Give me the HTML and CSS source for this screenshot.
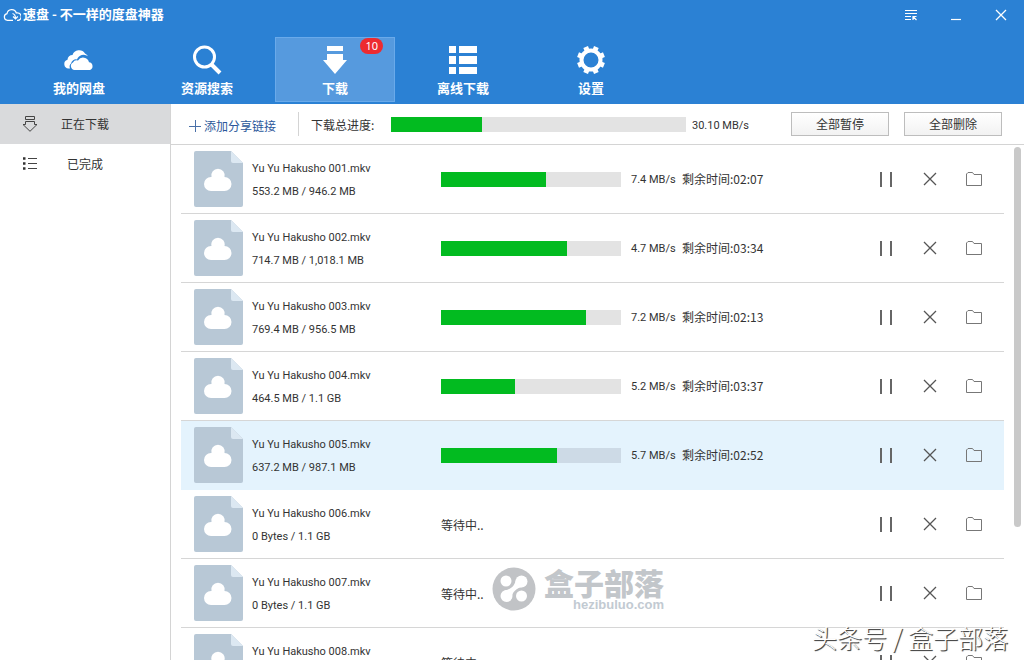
FILE: index.html
```html
<!DOCTYPE html>
<html lang="zh-CN">
<head>
<meta charset="utf-8">
<title>速盘 - 不一样的度盘神器</title>
<link rel="stylesheet" href="styles.css">
</head>
<body>
<svg class="defs" aria-hidden="true">
  <symbol id="i-file" viewBox="0 0 49 56">
    <path d="M2 0H37L49 12V54a2 2 0 0 1-2 2H2a2 2 0 0 1-2-2V2a2 2 0 0 1 2-2z" fill="#b8c8d6"/>
    <path d="M37 0L49 12H39a2 2 0 0 1-2-2z" fill="#dce8f2"/>
    <path d="M17 40a7 7 0 0 1 0-14h.500a6.700 6.700 0 1 1 13 0H30.500a7 7 0 0 1 0 14z" fill="#fff"/>
  </symbol>
  <symbol id="i-pause" viewBox="0 0 16 16"><path d="M3 1V16M13 1V16" stroke="#666" stroke-width="2"/></symbol>
  <symbol id="i-close" viewBox="0 0 16 16"><path d="M2 2L14 14M14 2L2 14" stroke="#555" stroke-width="1.300"/></symbol>
  <symbol id="i-folder" viewBox="0 0 18 16"><path d="M1.500 14.500V3L3 1.500H7.500L9 3.500H16.500V14.500z" fill="none" stroke="#777"/></symbol>
</svg>
<div class="app">
  <header class="header">
    <div class="titlebar">
      <svg class="logo" viewBox="0 0 18 14"><path d="M10 12.400H4.500A3.400 3.400 0 0 1 4 5.700 4.800 4.800 0 0 1 13.300 5a3.800 3.800 0 0 1 2 7.400H14M9.500 5.500c2 .500 3 2 3 5M10 8.500l2.500 2.500L14.800 8.500" fill="none" stroke="#fff" stroke-width="1.200"/></svg>
      <h1 class="title">速盘 - 不一样的度盘神器</h1>
      <div class="window-buttons">
        <button class="win" aria-label="菜单"><svg viewBox="0 0 14 14"><path d="M1 2.500H13M1 5.500H13M1 8.500H7M1 11.500H7M9 12V8.500H12.500M9 8.500L12.500 12" fill="none" stroke="#fff" stroke-width="1.200"/></svg></button>
        <button class="win" aria-label="最小化"><svg viewBox="0 0 14 14"><path d="M2 11.500H12" stroke="#fff" stroke-width="1.200"/></svg></button>
        <button class="win" aria-label="关闭"><svg viewBox="0 0 14 14"><path d="M2 2L12 12M12 2L2 12" stroke="#fff" stroke-width="1.300"/></svg></button>
      </div>
    </div>
    <nav class="tabs">
      <button class="tab"><svg viewBox="0 0 32 32"><path d="M7 24.500H5.500a4.500 4.500 0 0 1-1-8.800A5 5 0 0 1 9.500 11a7 7 0 0 1 12.500-1.500 6 6 0 0 1 3 2.800A7 7 0 0 0 14 15.500a5 5 0 0 0-6 4 4.500 4.500 0 0 0-1 5z" fill="#fff"/><path d="M11.500 26a4 4 0 0 1-1.500-7.500 4 4 0 0 1 5-2 6 6 0 0 1 11 1.800A4 4 0 0 1 27 26z" fill="#fff"/></svg>我的网盘</button>
      <button class="tab"><svg viewBox="0 0 32 32"><circle cx="13.500" cy="13" r="10" fill="none" stroke="#fff" stroke-width="3"/><path d="M20.500 20.500L29 29" stroke="#fff" stroke-width="4"/></svg>资源搜索</button>
      <button class="tab tab-active"><svg viewBox="0 0 32 32"><path d="M8 2H24V7H8zM8 10H24V16H28L16 30 4 16H8z" fill="#fff"/></svg>下载<span class="badge">10</span></button>
      <button class="tab"><svg viewBox="0 0 32 32"><path d="M2 2h7v7H2zM12 2h18v7H12zM2 12h7v8H2zM12 12h18v8H12zM2 23h7v7H2zM12 23h18v7H12z" fill="#fff"/></svg>离线下载</button>
      <button class="tab"><svg viewBox="0 0 32 32"><g fill="#fff"><path id="tooth" d="M13.500 2h5v6h-5z" transform="rotate(22.500 16 16)"/><use href="#tooth" transform="rotate(45 16 16)"/><use href="#tooth" transform="rotate(90 16 16)"/><use href="#tooth" transform="rotate(135 16 16)"/><use href="#tooth" transform="rotate(180 16 16)"/><use href="#tooth" transform="rotate(225 16 16)"/><use href="#tooth" transform="rotate(270 16 16)"/><use href="#tooth" transform="rotate(315 16 16)"/></g><circle cx="16" cy="16" r="9.500" fill="none" stroke="#fff" stroke-width="4"/></svg>设置</button>
    </nav>
  </header>
  <div class="body">
    <aside class="sidebar">
      <button class="side side-active"><svg viewBox="0 0 16 16"><path d="M3.500 .500H12.500V3.500H3.500zM3.500 5.500H12.500V8.500H15L8 15.300 1 8.500H3.500z" fill="none" stroke="#444"/></svg><span>正在下载</span></button>
      <button class="side"><svg viewBox="0 0 16 16"><path d="M1 2.500H3.500M1 7.500H3.500M1 12.500H3.500" stroke="#333" stroke-width="2.500"/><path d="M6 2.500H15M6 7.500H15M6 12.500H15" stroke="#444"/></svg><span>已完成</span></button>
    </aside>
    <main class="main">
      <div class="toolbar">
        <a class="add" href="#"><svg viewBox="0 0 12 12"><path d="M6.500 0V12M0 6.500H12" stroke="#4a70a8"/></svg>添加分享链接</a>
        <span class="label" id="total">下载总进度:</span>
        <div class="bar bar-total" role="progressbar" aria-labelledby="total"><div class="fill" style="width:31%"></div></div>
        <span class="total-speed">30.10 MB/s</span>
        <div class="bulk"><button class="btn">全部暂停</button><button class="btn">全部删除</button></div>
      </div>
      <div class="scroller">
        <ul class="list">
          <li class="row"><svg class="file"><use href="#i-file"/></svg><div class="info"><span>Yu Yu Hakusho 001.mkv</span><span>553.2 MB / 946.2 MB</span></div><div class="bar" role="progressbar" aria-label="001"><div class="fill" style="width:58.400%"></div></div><div class="state"><span class="speed">7.4 MB/s</span><span class="left">剩余时间:02:07</span></div><div class="actions"><button aria-label="暂停"><svg><use href="#i-pause"/></svg></button><button aria-label="删除"><svg><use href="#i-close"/></svg></button><button aria-label="打开文件夹"><svg class="folder"><use href="#i-folder"/></svg></button></div></li>
          <li class="row"><svg class="file"><use href="#i-file"/></svg><div class="info"><span>Yu Yu Hakusho 002.mkv</span><span>714.7 MB / 1,018.1 MB</span></div><div class="bar" role="progressbar" aria-label="002"><div class="fill" style="width:70.200%"></div></div><div class="state"><span class="speed">4.7 MB/s</span><span class="left">剩余时间:03:34</span></div><div class="actions"><button aria-label="暂停"><svg><use href="#i-pause"/></svg></button><button aria-label="删除"><svg><use href="#i-close"/></svg></button><button aria-label="打开文件夹"><svg class="folder"><use href="#i-folder"/></svg></button></div></li>
          <li class="row"><svg class="file"><use href="#i-file"/></svg><div class="info"><span>Yu Yu Hakusho 003.mkv</span><span>769.4 MB / 956.5 MB</span></div><div class="bar" role="progressbar" aria-label="003"><div class="fill" style="width:80.500%"></div></div><div class="state"><span class="speed">7.2 MB/s</span><span class="left">剩余时间:02:13</span></div><div class="actions"><button aria-label="暂停"><svg><use href="#i-pause"/></svg></button><button aria-label="删除"><svg><use href="#i-close"/></svg></button><button aria-label="打开文件夹"><svg class="folder"><use href="#i-folder"/></svg></button></div></li>
          <li class="row"><svg class="file"><use href="#i-file"/></svg><div class="info"><span>Yu Yu Hakusho 004.mkv</span><span>464.5 MB / 1.1 GB</span></div><div class="bar" role="progressbar" aria-label="004"><div class="fill" style="width:41.200%"></div></div><div class="state"><span class="speed">5.2 MB/s</span><span class="left">剩余时间:03:37</span></div><div class="actions"><button aria-label="暂停"><svg><use href="#i-pause"/></svg></button><button aria-label="删除"><svg><use href="#i-close"/></svg></button><button aria-label="打开文件夹"><svg class="folder"><use href="#i-folder"/></svg></button></div></li>
          <li class="row row-active"><svg class="file"><use href="#i-file"/></svg><div class="info"><span>Yu Yu Hakusho 005.mkv</span><span>637.2 MB / 987.1 MB</span></div><div class="bar" role="progressbar" aria-label="005"><div class="fill" style="width:64.500%"></div></div><div class="state"><span class="speed">5.7 MB/s</span><span class="left">剩余时间:02:52</span></div><div class="actions"><button aria-label="暂停"><svg><use href="#i-pause"/></svg></button><button aria-label="删除"><svg><use href="#i-close"/></svg></button><button aria-label="打开文件夹"><svg class="folder"><use href="#i-folder"/></svg></button></div></li>
          <li class="row"><svg class="file"><use href="#i-file"/></svg><div class="info"><span>Yu Yu Hakusho 006.mkv</span><span>0 Bytes / 1.1 GB</span></div><div class="waiting">等待中..</div><div class="actions"><button aria-label="暂停"><svg><use href="#i-pause"/></svg></button><button aria-label="删除"><svg><use href="#i-close"/></svg></button><button aria-label="打开文件夹"><svg class="folder"><use href="#i-folder"/></svg></button></div></li>
          <li class="row"><svg class="file"><use href="#i-file"/></svg><div class="info"><span>Yu Yu Hakusho 007.mkv</span><span>0 Bytes / 1.1 GB</span></div><div class="waiting">等待中..</div><div class="actions"><button aria-label="暂停"><svg><use href="#i-pause"/></svg></button><button aria-label="删除"><svg><use href="#i-close"/></svg></button><button aria-label="打开文件夹"><svg class="folder"><use href="#i-folder"/></svg></button></div></li>
          <li class="row"><svg class="file"><use href="#i-file"/></svg><div class="info"><span>Yu Yu Hakusho 008.mkv</span></div><div class="waiting">等待中..</div><div class="actions"><button aria-label="暂停"><svg><use href="#i-pause"/></svg></button><button aria-label="删除"><svg><use href="#i-close"/></svg></button><button aria-label="打开文件夹"><svg class="folder"><use href="#i-folder"/></svg></button></div></li>
        </ul>
        <div class="track"><div class="thumb"></div></div>
      </div>
    </main>
  </div>
  <div class="brand">
    <svg viewBox="0 0 44 44"><circle cx="22" cy="22" r="21.500" fill="#c1c3c6"/><g fill="#fff"><circle cx="14" cy="14" r="5.500"/><circle cx="29.500" cy="29" r="5.500"/><circle cx="29.500" cy="14.500" r="6"/><circle cx="14.500" cy="29" r="6"/><path d="M24 12C23 18 20 22 12.500 23.500L19.500 32C20 25 24 21 32 19.500z"/></g></svg>
    <div class="brand-text"><span class="brand-name">盒子部落</span><span class="brand-url">hezibuluo.com</span></div>
  </div>
  <div class="credit">头条号 / 盒子部落</div>
</div>
</body>
</html>
```
FILE: styles.css
```css
* { box-sizing: border-box; }
body {
  margin: 0;
  font: 12px/16px "Noto Sans CJK SC", "Noto Sans", sans-serif;
  color: #333;
  background: #fff;
}
button {
  border: 0;
  padding: 0;
  background: none;
  font: inherit;
  color: inherit;
}
.defs { display: none; }
.app {
  position: relative;
  height: 100vh;
  display: flex;
  flex-direction: column;
  overflow: hidden;
}
.header {
  background: #2b81d4;
  color: #fff;
  padding-bottom: 2px;
}
.titlebar {
  display: flex;
  align-items: center;
  height: 30px;
  margin-bottom: 7px;
  padding: 0 16px 0 3px;
}
.logo { width: 18px; height: 14px; }
.title { margin: 0 0 0 2px; padding-bottom: 2px; font-size: 13px; line-height: 16px; font-weight: 700; }
.window-buttons { display: flex; gap: 31px; margin-left: auto; }
.win { width: 14px; height: 14px; }
.win svg { display: block; width: 14px; height: 14px; }
.tabs { display: flex; gap: 8px; padding-left: 19px; }
.tab {
  position: relative;
  display: flex;
  flex-direction: column;
  align-items: center;
  gap: 4px;
  width: 120px;
  height: 65px;
  padding-top: 6px;
  border: 1px solid transparent;
  font-size: 13px;
  font-weight: 700;
}
.tab svg { width: 32px; height: 32px; }
.tab-active { background: #569ade; border-color: #6aaaea; }
.badge {
  position: absolute;
  top: 0;
  right: 11px;
  padding: 0 5px;
  border-radius: 8px;
  background: #ed2b30;
  font-family: "Noto Sans", sans-serif;
  font-size: 11px;
  font-weight: 400;
}
.body { flex: 1; display: flex; min-height: 0; }
.sidebar { width: 171px; border-right: 1px solid #d4d4d4; }
.side {
  display: grid;
  grid-template-columns: 38px 1fr 38px;
  align-items: center;
  width: 100%;
  height: 40px;
}
.side svg { width: 16px; height: 16px; margin-left: 22px; }
.side-active { background: #d9dadc; }
.main { flex: 1; min-width: 0; display: flex; flex-direction: column; }
.toolbar {
  display: flex;
  align-items: center;
  height: 41px;
  padding: 0 22px 0 18px;
  border-bottom: 1px solid #d4d4d4;
}
.add {
  display: flex;
  align-items: center;
  gap: 3px;
  padding: 3px 22px 0 0;
  color: #2b579a;
  text-decoration: none;
}
.add svg { width: 12px; height: 12px; }
.label {
  width: 93px;
  padding: 5px 0 3px 12px;
  border-left: 1px solid #d4d4d4;
}
.bar { height: 15px; background: #e3e3e3; }
.bar-total { flex: 1; }
.fill { height: 100%; background: #02bb20; }
.total-speed { width: 105px; padding: 3px 0 0 6px; }
.info, .speed, .total-speed { font-family: Roboto, sans-serif; font-size: 11px; }
.bulk { display: flex; gap: 15px; }
.btn {
  width: 98px;
  height: 24px;
  border: 1px solid #bdbdbd;
  background: linear-gradient(#fff, #f2f2f2);
}
.scroller { flex: 1; display: flex; min-height: 0; overflow: hidden; }
.list { flex: 1; margin: 0; padding: 0 0 0 10px; list-style: none; }
.row {
  display: grid;
  grid-template-columns: 58px 189px 180px 1fr 132px;
  align-items: center;
  height: 69px;
  padding: 0 8px 0 13px;
  border-bottom: 1px solid #d6d6d6;
}
.row-active { background: #e4f3fd; border-color: #e4f3fd; }
.row-active .bar { background: #cddae6; }
.file { width: 49px; height: 56px; }
.info {
  align-self: start;
  display: flex;
  flex-direction: column;
  gap: 7px;
  padding-top: 16px;
}
.state { display: flex; align-items: center; padding-left: 10px; }
.speed { width: 51px; padding-top: 2px; }
.waiting { grid-column: 3 / 5; padding-top: 1px; }
.actions { display: grid; grid-template-columns: repeat(3, 1fr); }
.actions svg { display: block; width: 16px; height: 16px; margin: 0 auto; }
.actions .folder { width: 18px; }
.track { width: 20px; padding: 2px 3px 0 10px; }
.thumb { height: 74%; border-radius: 4px; background: #c9c9c9; }
.brand {
  position: absolute;
  left: 492px;
  top: 567px;
  display: flex;
  gap: 8px;
}
.brand svg { width: 44px; height: 44px; }
.brand-text { display: flex; flex-direction: column; align-items: flex-end; }
.brand-name {
  font: 900 30px/30px "Noto Sans CJK SC", sans-serif;
  color: #c2c6ca;
}
.brand-url {
  font: 700 13px/16px "Liberation Sans", sans-serif;
  color: #c2cad2;
}
.credit {
  position: absolute;
  right: 16px;
  bottom: 7px;
  font: 300 25px/32px "Noto Sans CJK SC", sans-serif;
  color: #fff;
  text-shadow: 1px 1px 1px #444, 1px 1px 0 #777;
}
```
